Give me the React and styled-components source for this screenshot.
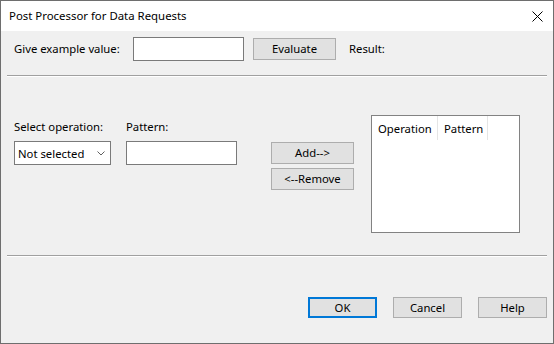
import styled, { createGlobalStyle } from 'styled-components';

const GlobalStyle = createGlobalStyle`
  html, body {
    margin: 0;
    padding: 0;
    background: #ffffff;
  }
  body {
    font-family: "Noto Sans", "Liberation Sans", sans-serif;
    font-size: 11.3px;
    color: #000000;
  }
`;

const Window = styled.div`
  width: 554px;
  height: 344px;
  box-sizing: border-box;
  border: 1px solid #6e6e6e;
  display: flex;
  flex-direction: column;
  background: #f0f0f0;
`;

const TitleBar = styled.div`
  height: 30px;
  background: #ffffff;
  display: flex;
  align-items: center;
  justify-content: space-between;
  padding: 0 10px 0 8px;
`;

const Title = styled.span`
  font-size: 11.4px;
  line-height: 16px;
`;

const Body = styled.div`
  flex: 1;
  display: flex;
  flex-direction: column;
  padding: 6px 6px 0 6px;
`;

const Row = styled.div`
  display: flex;
  align-items: center;
  padding-left: 7px;
  height: 24px;
`;

const Label = styled.span`
  line-height: 16px;
  white-space: nowrap;
  width: ${p => p.$width || 'auto'};
  margin-right: ${p => p.$gap || 0}px;
`;

const TextBox = styled.div`
  box-sizing: border-box;
  width: ${p => p.$width}px;
  height: 24px;
  border: 1px solid #7a7a7a;
  background: #ffffff;
  margin-right: ${p => p.$gap || 0}px;
`;

const Button = styled.div`
  box-sizing: border-box;
  width: ${p => p.$width || 83}px;
  height: ${p => p.$height || 22}px;
  background: #e1e1e1;
  border: ${p => (p.$default ? '2px solid #0078d7' : '1px solid #adadad')};
  display: flex;
  align-items: center;
  justify-content: center;
  line-height: 16px;
  margin-right: ${p => p.$gap || 0}px;
`;

const Separator = styled.div`
  height: 1px;
  background: #a0a0a0;
  border-bottom: 1px solid #ffffff;
  margin-top: ${p => p.$top}px;
`;

const Middle = styled.div`
  display: flex;
  align-items: flex-start;
  padding-left: 7px;
`;

const FieldColumn = styled.div`
  display: flex;
  flex-direction: column;
  gap: 6px;
  margin-top: 42px;
  margin-right: ${p => p.$gap}px;
`;

const SelectBox = styled.div`
  box-sizing: border-box;
  width: 97px;
  height: 24px;
  border: 1px solid #7a7a7a;
  background: #ffffff;
  display: flex;
  align-items: center;
  justify-content: space-between;
  padding: 0 5px 0 3px;
`;

const ButtonColumn = styled.div`
  display: flex;
  flex-direction: column;
  gap: 4px;
  margin-top: 65px;
  margin-right: 17px;
`;

const ListView = styled.div`
  box-sizing: border-box;
  width: 149px;
  height: 118px;
  margin-top: 38px;
  border: 1px solid #828282;
  background: #ffffff;
`;

const ListHeader = styled.div`
  display: flex;
  height: 24px;
`;

const HeaderCell = styled.div`
  box-sizing: border-box;
  width: ${p => p.$width}px;
  border-right: 1px solid #e5e5e5;
  padding-left: 6px;
  display: flex;
  align-items: center;
`;

const Footer = styled.div`
  display: flex;
  justify-content: flex-end;
  gap: 16px;
  margin-top: 40px;
`;

const Chevron = () => (
  <svg width="8" height="5" viewBox="0 0 8 5">
    <path d="M0.5 0.5 L4 4 L7.5 0.5" fill="none" stroke="#606060" strokeWidth="1" />
  </svg>
);

const CloseIcon = () => (
  <svg width="11" height="11" viewBox="0 0 11 11">
    <path d="M0.5 0.5 L10.5 10.5 M10.5 0.5 L0.5 10.5" stroke="#000000" strokeWidth="1" />
  </svg>
);

export default function App() {
  return (
    <>
      <GlobalStyle />
      <Window>
        <TitleBar>
          <Title>Post Processor for Data Requests</Title>
          <CloseIcon />
        </TitleBar>
        <Body>
          <Row>
            <Label $width="119px">Give example value:</Label>
            <TextBox $width={111} $gap={9} />
            <Button $width={83} $gap={13}>Evaluate</Button>
            <Label>Result:</Label>
          </Row>
          <Separator $top={14} />
          <Middle>
            <FieldColumn $gap={15}>
              <Label>Select operation:</Label>
              <SelectBox>
                <span>Not selected</span>
                <Chevron />
              </SelectBox>
            </FieldColumn>
            <FieldColumn $gap={34}>
              <Label>Pattern:</Label>
              <TextBox $width={111} />
            </FieldColumn>
            <ButtonColumn>
              <Button>Add--&gt;</Button>
              <Button>&lt;--Remove</Button>
            </ButtonColumn>
            <ListView>
              <ListHeader>
                <HeaderCell $width={66}>Operation</HeaderCell>
                <HeaderCell $width={50}>Pattern</HeaderCell>
              </ListHeader>
            </ListView>
          </Middle>
          <Separator $top={22} />
          <Footer>
            <Button $width={69} $height={21} $default>OK</Button>
            <Button $width={69} $height={21}>Cancel</Button>
            <Button $width={69} $height={21}>Help</Button>
          </Footer>
        </Body>
      </Window>
    </>
  );
}
